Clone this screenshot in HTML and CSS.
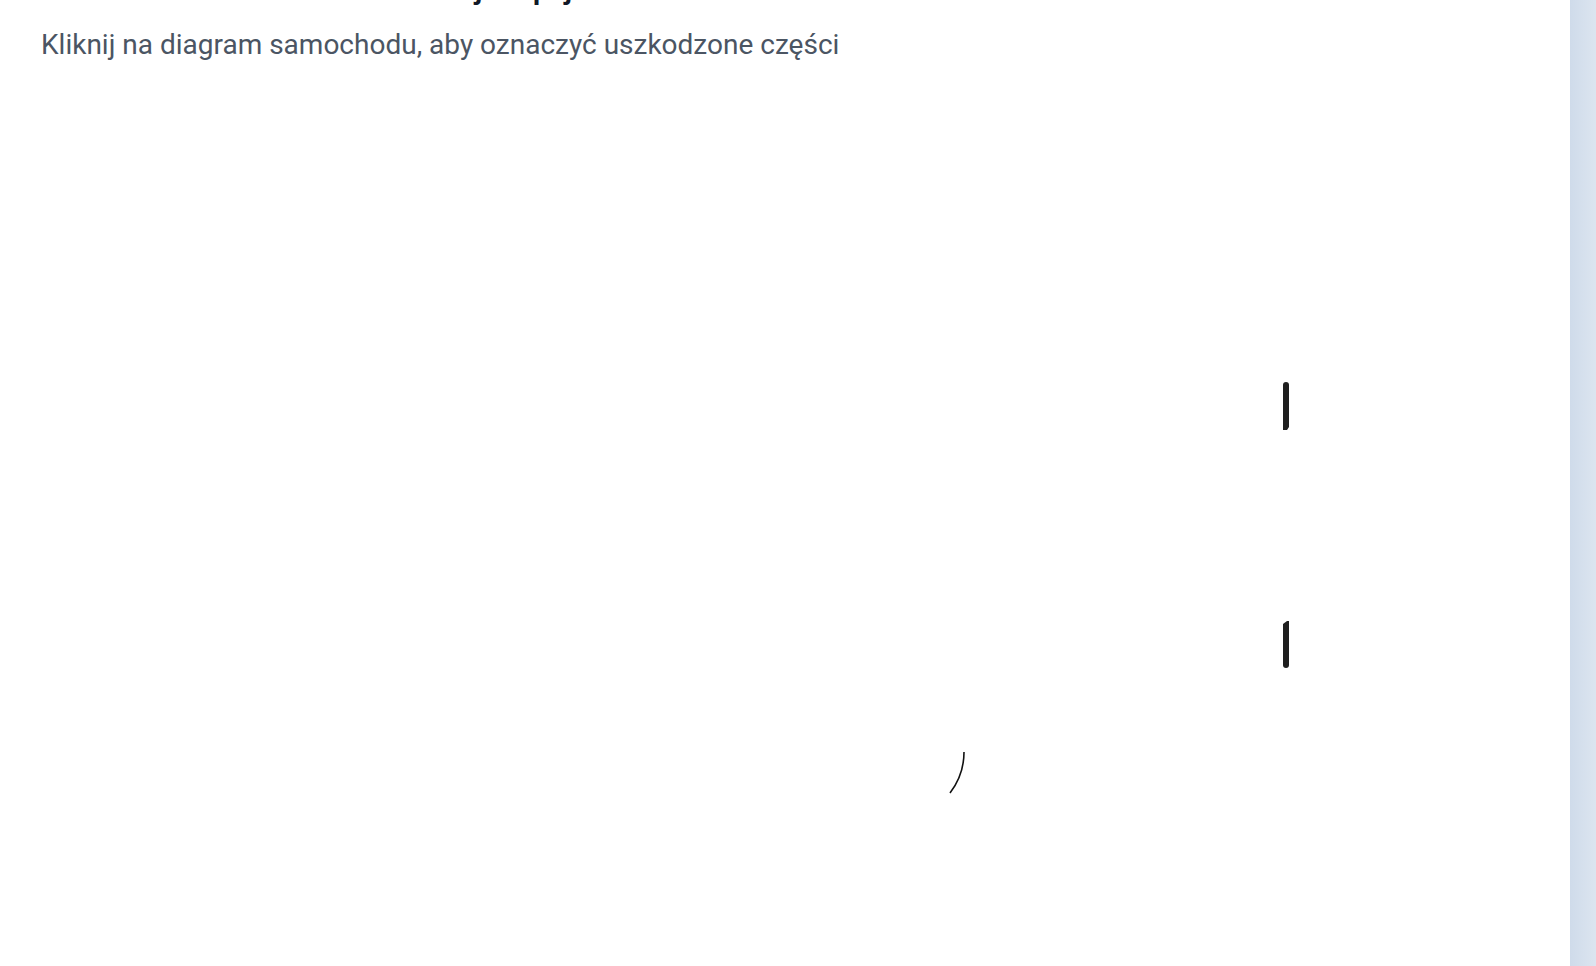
FILE: index.html
```html
<!DOCTYPE html>
<html lang="pl">
<head>
<meta charset="utf-8">
<title>Diagram uszkodzeń</title>
<link rel="stylesheet" href="styles.css">
</head>
<body>
<div class="page">
  <main class="panel">
    <h1 class="title">Zaznacz wszelkie uszkodzone miejsca pojazdu</h1>
    <p class="subtitle">Kliknij na diagram samochodu, aby oznaczyć uszkodzone części</p>
    <div class="diagram">
      <svg class="car" width="1529" height="886" viewBox="0 0 1529 886" xmlns="http://www.w3.org/2000/svg">
        <path d="M1242 305 A3 3 0 0 1 1248 305 L1248 347 L1246 350 L1242 350 Z" fill="#1f1f1f"/>
        <path d="M1242 544 L1246 541 L1248 541 L1248 585 A3 3 0 0 1 1242 585 Z" fill="#1f1f1f"/>
        <path d="M923 672 A67 67 0 0 1 909 713" fill="none" stroke="#111" stroke-width="1.6"/>
      </svg>
    </div>
  </main>
  <aside class="side"></aside>
</div>
</body>
</html>
```

FILE: styles.css
```css
html, body {
  margin: 0;
  padding: 0;
  height: 100%;
  overflow: hidden;
}
body {
  font-family: Roboto, "Noto Sans", Arial, sans-serif;
  background: #ffffff;
}
.page {
  display: flex;
  height: 966px;
}
.panel {
  width: 1570px;
  flex: 0 0 1570px;
  background: #ffffff;
  padding-left: 41px;
  box-sizing: border-box;
}
.side {
  flex: 1 1 auto;
  background: linear-gradient(to right, #cfdbea, #dce5f0);
}
.title {
  margin: -26px 0 0 0;
  font-size: 28px;
  line-height: 32px;
  font-weight: 700;
  color: #111827;
}
.subtitle {
  margin: 22px 0 0 0;
  font-size: 28px;
  line-height: 33px;
  color: #4b5563;
}
.diagram {
  margin-top: 19px;
}
.car {
  display: block;
}
```
